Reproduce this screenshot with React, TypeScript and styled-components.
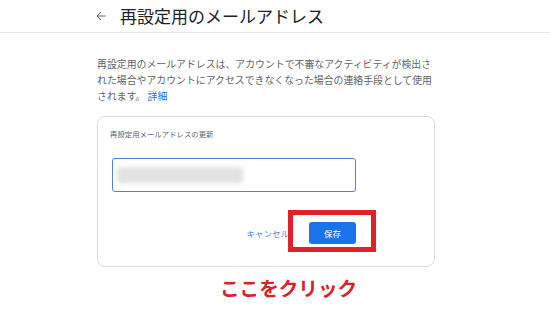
import React from "react";
import styled, { createGlobalStyle } from "styled-components";

const Global = createGlobalStyle`
  html, body { margin: 0; padding: 0; background: #ffffff; }
  body { font-family: "Noto Sans CJK JP", "Noto Sans", sans-serif; }
  * { box-sizing: border-box; }
`;

const Page = styled.div`
  width: 550px;
  height: 311px;
  overflow: hidden;
  background: #ffffff;
`;

const Header = styled.header`
  height: 33px;
  border-bottom: 1px solid #e6e7e9;
  display: flex;
  align-items: center;
  padding-left: 96px;
  gap: 14px;
`;

const BackButton = styled.span`
  display: flex;
  align-items: center;
  width: 10px;
  height: 10px;
  color: #5f6368;
`;

const Title = styled.h1`
  margin: 0;
  font-size: 17px;
  font-weight: 400;
  line-height: 22px;
  color: #202124;
`;

const Main = styled.main`
  padding-left: 97px;
  width: 435px;
  box-sizing: content-box;
`;

const Intro = styled.p`
  margin: 23px 0 0 0;
  width: 350px;
  font-size: 9.9px;
  line-height: 16px;
  color: #5f6368;
`;

const Link = styled.a`
  color: #1a73e8;
  text-decoration: none;
`;

const Card = styled.section`
  margin-top: 12px;
  width: 338px;
  height: 151px;
  border: 1px solid #dadce0;
  border-radius: 8px;
  padding: 12px 0 0 12px;
  display: flex;
  flex-direction: column;
`;

const Label = styled.div`
  font-size: 7.4px;
  line-height: 10px;
  color: #5f6368;
`;

const Form = styled.div`
  width: 244px;
  margin-left: 2px;
  display: flex;
  flex-direction: column;
`;

const InputBox = styled.div`
  margin-top: 19px;
  height: 34px;
  border: 1.5px solid #4a86d0;
  border-radius: 3px;
  display: flex;
  align-items: center;
  padding-left: 4px;
`;

const Blurred = styled.div`
  width: 126px;
  height: 16px;
  background: #e3e3e3;
  border-radius: 2px;
  filter: blur(2px);
`;

const Actions = styled.div`
  margin-top: 30px;
  display: flex;
  justify-content: flex-end;
  align-items: center;
  gap: 20px;
`;

const TextButton = styled.button`
  border: none;
  background: none;
  padding: 0;
  font-family: inherit;
  font-size: 8.5px;
  line-height: 22px;
  color: #4a86d6;
`;

const SaveWrap = styled.div`
  position: relative;
  display: flex;
`;

const SaveButton = styled.button`
  width: 47px;
  height: 22px;
  border: none;
  border-radius: 3px;
  background: #1a73e8;
  color: #ffffff;
  font-family: inherit;
  font-size: 8.5px;
  padding: 0;
`;

const Highlight = styled.div`
  position: absolute;
  left: -21px;
  top: -12px;
  width: 88px;
  height: 42px;
  border: 5px solid #e3202a;
  pointer-events: none;
`;

const Caption = styled.div`
  margin: 9px 0 0 123px;
  font-size: 19.6px;
  line-height: 24px;
  font-weight: 700;
  color: #d9222a;
`;

export default function App() {
  return (
    <Page>
      <Global />
      <Header>
        <BackButton>
          <svg width="10" height="10" viewBox="0 0 10 10" fill="none">
            <path d="M9.5 5H1M5 1L1 5L5 9" stroke="currentColor" strokeWidth="1" />
          </svg>
        </BackButton>
        <Title>再設定用のメールアドレス</Title>
      </Header>
      <Main>
        <Intro>
          再設定用のメールアドレスは、アカウントで不審なアクティビティが検出さ
          <br />
          れた場合やアカウントにアクセスできなくなった場合の連絡手段として使用
          <br />
          されます。 <Link href="#">詳細</Link>
        </Intro>
        <Card>
          <Label>再設定用メールアドレスの更新</Label>
          <Form>
            <InputBox>
              <Blurred />
            </InputBox>
            <Actions>
              <TextButton>キャンセル</TextButton>
              <SaveWrap>
                <SaveButton>保存</SaveButton>
                <Highlight />
              </SaveWrap>
            </Actions>
          </Form>
        </Card>
        <Caption>ここをクリック</Caption>
      </Main>
    </Page>
  );
}
